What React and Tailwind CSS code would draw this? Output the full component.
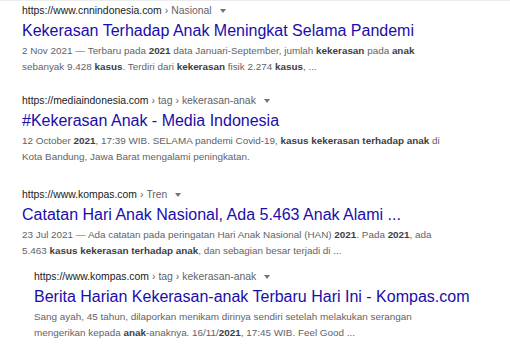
import React from "react";

function Result({ url, crumbs, title, lines, indent }) {
  return (
    <div className={indent ? "pl-[34px]" : "pl-[22px]"}>
      <div className="text-[10.4px] h-[14px] leading-[14px] text-[#202124] flex items-center whitespace-nowrap">
        <span>{url}</span>
        {crumbs.map((c, i) => (
          <span key={i} className="text-[#5f6368]">
            <span className="mx-[3px]">›</span>
            {c}
          </span>
        ))}
        <svg width="6" height="4" viewBox="0 0 6 4" className="ml-[8px]">
          <path d="M0 0 L6 0 L3 4 Z" fill="#70757a" />
        </svg>
      </div>
      <div className="text-[16px] h-[25px] leading-[25px] text-[#1a0dab] whitespace-nowrap">{title}</div>
      <div className="text-[9.9px] leading-[16px] text-[#5f6368] whitespace-nowrap">
        {lines.map((l, i) => (
          <div key={i}>{l}</div>
        ))}
      </div>
    </div>
  );
}

const B = ({ children }) => <b className="font-bold text-[#3c4043]">{children}</b>;

export default function App() {
  return (
    <div
      className="w-[510px] h-[355px] bg-white border-t border-[#ececec] overflow-hidden pt-[3px]"
      style={{ fontFamily: "'Liberation Sans', Arial, sans-serif" }}
    >
      <Result
        url="https://www.cnnindonesia.com"
        crumbs={["Nasional"]}
        title="Kekerasan Terhadap Anak Meningkat Selama Pandemi"
        lines={[
          <>2 Nov 2021 — Terbaru pada <B>2021</B> data Januari-September, jumlah <B>kekerasan</B> pada <B>anak</B></>,
          <>sebanyak 9.428 <B>kasus</B>. Terdiri dari <B>kekerasan</B> fisik 2.274 <B>kasus</B>, ...</>,
        ]}
      />
      <div className="h-[19px]" />
      <Result
        url="https://mediaindonesia.com"
        crumbs={["tag", "kekerasan-anak"]}
        title="#Kekerasan Anak - Media Indonesia"
        lines={[
          <>12 October <B>2021</B>, 17:39 WIB. SELAMA pandemi Covid-19, <B>kasus kekerasan terhadap anak</B> di</>,
          <>Kota Bandung, Jawa Barat mengalami peningkatan.</>,
        ]}
      />
      <div className="h-[23px]" />
      <Result
        url="https://www.kompas.com"
        crumbs={["Tren"]}
        title="Catatan Hari Anak Nasional, Ada 5.463 Anak Alami ..."
        lines={[
          <>23 Jul 2021 — Ada catatan pada peringatan Hari Anak Nasional (HAN) <B>2021</B>. Pada <B>2021</B>, ada</>,
          <>5.463 <B>kasus kekerasan terhadap anak</B>, dan sebagian besar terjadi di ...</>,
        ]}
      />
      <div className="h-[11px]" />
      <Result
        indent
        url="https://www.kompas.com"
        crumbs={["tag", "kekerasan-anak"]}
        title="Berita Harian Kekerasan-anak Terbaru Hari Ini - Kompas.com"
        lines={[
          <>Sang ayah, 45 tahun, dilaporkan menikam dirinya sendiri setelah melakukan serangan</>,
          <>mengerikan kepada <B>anak</B>-anaknya. 16/11/<B>2021</B>, 17:45 WIB. Feel Good ...</>,
        ]}
      />
    </div>
  );
}
